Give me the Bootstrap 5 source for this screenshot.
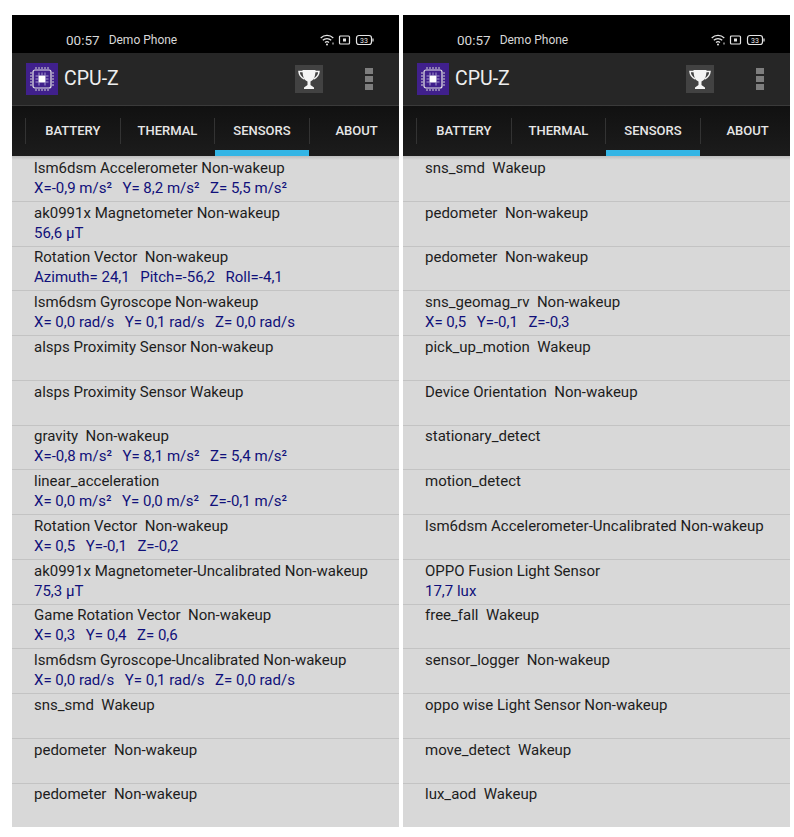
<!DOCTYPE html>
<html lang="en">
<head>
<meta charset="UTF-8">
<title>CPU-Z sensors</title>
<link rel="stylesheet" href="https://cdn.jsdelivr.net/npm/bootstrap@5.3.0/dist/css/bootstrap.min.css">
<style>
body { background: #fff; font-family: Roboto, "Liberation Sans", sans-serif; }
.shots { padding: 15px 4px 0 12px; gap: 4px; }
.phone { width: 387px; height: 812px; overflow: hidden; background: #d8d8d8; }
.status-bar { height: 38px; background: #000; color: #d8d8d8; padding: 12px 25px 0 54px; font-size: 12px; }
.status-time { font-size: 13.5px; margin-right: 9px; }
.app-bar { height: 53px; background: #262626; border-bottom: 1px solid #3a3a3a; padding-left: 14px; color: #eee; }
.app-title { font-size: 19.5px; margin-left: 6px; }
.trophy { width: 28px; height: 28px; background: #424242; margin-left: auto; }
.kebab { width: 8px; margin: 0 26px 0 42px; gap: 2px; }
.kebab span { height: 6px; background: #7d7d7d; }
.tab-bar { height: 50px; background: linear-gradient(#111, #1c1c1c); padding-left: 13px; }
.tab-item { flex: 0 0 94.6px; position: relative; color: #e6e6e6; font-size: 13px; font-weight: 500; border-left: 1px solid #333; margin: 12px 0; }
.tab-item.active::after { content: ""; position: absolute; left: 0; right: 0; bottom: -12px; height: 6px; background: #33b5e5; }
.sensor-list { padding-top: 1px; background: linear-gradient(#bdbdbd, #d8d8d8 4px); }
.sensor-row { height: 44.75px; padding: .8px 0 0 22px; border-bottom: 1px solid #c3c3c3; font-size: 15px; line-height: 20px; color: #1d1d1d; white-space: nowrap; overflow: hidden; }
.sensor-row:last-child { border-bottom: 0; }
.sensor-name { white-space: pre; }
.sensor-val { color: #10107a; }
.sensor-val span { margin-right: 10.5px; }
.batt-num { font-family: Roboto, sans-serif; font-size: 7px; fill: #e6e6e6; }
</style>
</head>
<body>
<div class="shots d-flex" id="shots"></div>

<script>
const leftRows = [
  ["lsm6dsm Accelerometer Non-wakeup", ["X=-0,9 m/s²", "Y= 8,2 m/s²", "Z= 5,5 m/s²"]],
  ["ak0991x Magnetometer Non-wakeup", ["56,6 µT"]],
  ["Rotation Vector  Non-wakeup", ["Azimuth= 24,1", "Pitch=-56,2", "Roll=-4,1"]],
  ["lsm6dsm Gyroscope Non-wakeup", ["X= 0,0 rad/s", "Y= 0,1 rad/s", "Z= 0,0 rad/s"]],
  ["alsps Proximity Sensor Non-wakeup"],
  ["alsps Proximity Sensor Wakeup"],
  ["gravity  Non-wakeup", ["X=-0,8 m/s²", "Y= 8,1 m/s²", "Z= 5,4 m/s²"]],
  ["linear_acceleration", ["X= 0,0 m/s²", "Y= 0,0 m/s²", "Z=-0,1 m/s²"]],
  ["Rotation Vector  Non-wakeup", ["X= 0,5", "Y=-0,1", "Z=-0,2"]],
  ["ak0991x Magnetometer-Uncalibrated Non-wakeup", ["75,3 µT"]],
  ["Game Rotation Vector  Non-wakeup", ["X= 0,3", "Y= 0,4", "Z= 0,6"]],
  ["lsm6dsm Gyroscope-Uncalibrated Non-wakeup", ["X= 0,0 rad/s", "Y= 0,1 rad/s", "Z= 0,0 rad/s"]],
  ["sns_smd  Wakeup"],
  ["pedometer  Non-wakeup"],
  ["pedometer  Non-wakeup"]
];
const rightRows = [
  ["sns_smd  Wakeup"],
  ["pedometer  Non-wakeup"],
  ["pedometer  Non-wakeup"],
  ["sns_geomag_rv  Non-wakeup", ["X= 0,5", "Y=-0,1", "Z=-0,3"]],
  ["pick_up_motion  Wakeup"],
  ["Device Orientation  Non-wakeup"],
  ["stationary_detect"],
  ["motion_detect"],
  ["lsm6dsm Accelerometer-Uncalibrated Non-wakeup"],
  ["OPPO Fusion Light Sensor", ["17,7 lux"]],
  ["free_fall  Wakeup"],
  ["sensor_logger  Non-wakeup"],
  ["oppo wise Light Sensor Non-wakeup"],
  ["move_detect  Wakeup"],
  ["lux_aod  Wakeup"]
];

const chipIcon = `<svg width="32" height="32" viewBox="0 0 32 32"><rect width="32" height="32" fill="#40208c"/>
  <rect x="7" y="7" width="18" height="18" rx="2" fill="none" stroke="#e6e6e6" stroke-width="1.2"/>
  <rect x="12.5" y="12.5" width="7" height="7" fill="#fff"/>
  <path d="M10 4v2M13 4v2M16 4v2M19 4v2M22 4v2M10 26v2M13 26v2M16 26v2M19 26v2M22 26v2M4 10h2M4 13h2M4 16h2M4 19h2M4 22h2M26 10h2M26 13h2M26 16h2M26 19h2M26 22h2" stroke="#d5d5d5" stroke-width="1"/>
  <path d="M9.5 13h3M9.5 16h3M9.5 19h3M19.5 13h3M19.5 16h3M19.5 19h3M13 9.5v3M16 9.5v3M19 9.5v3M13 19.5v3M19 19.5v3" stroke="#c4bce2" stroke-width=".8"/></svg>`;
const trophyIcon = `<svg width="22" height="21" viewBox="0 0 22 21"><path d="M4.500 1h13c0 6-1.500 10-5 11.500V16l3.500 2.500V20H6v-1.500L9.500 16v-3.500C6 11 4.500 7 4.500 1z" fill="#f4f4f4"/><path d="M5 2.500H1c.2 3.500 2 6 5.500 7.500M17 2.500h4c-.2 3.500-2 6-5.500 7.500" fill="none" stroke="#f4f4f4" stroke-width="1.500"/></svg>`;
const statusIcons = `<svg width="54" height="12" viewBox="0 0 54 12" fill="none" stroke="#e6e6e6">
  <path d="M.7 4a9 9 0 0 1 12.600 0M2.800 6.300a6 6 0 0 1 8.400 0M5 8.500a3 3 0 0 1 4 0" stroke-width="1.200"/><circle cx="7" cy="10.500" r="1" fill="#e6e6e6" stroke="none"/><path d="M13 8.500v2" stroke-width="1"/>
  <rect x="19.500" y="2" width="10" height="8" rx="1" stroke-width="1.200"/><rect x="23" y="4.500" width="3" height="3" fill="#e6e6e6" stroke="none"/>
  <rect x="36.500" y="1.500" width="15" height="9" rx="2.500" stroke-width="1.200"/><path d="M53 4.500v3" stroke-width="1.200"/>
  <text class="batt-num" x="44" y="8.500" text-anchor="middle" stroke="none">33</text></svg>`;

const rowHtml = ([name, vals]) => `
  <div class="sensor-row">
    <div class="sensor-name">${name}</div>
    ${vals ? `<div class="sensor-val">${vals.map(v => `<span>${v}</span>`).join("")}</div>` : ""}
  </div>`;

const phoneHtml = (rows) => `
  <div class="phone d-flex flex-column">
    <div class="status-bar d-flex flex-shrink-0 align-items-center">
      <span class="status-time">00:57</span><span>Demo Phone</span>
      <span class="ms-auto d-flex">${statusIcons}</span>
    </div>
    <div class="app-bar d-flex flex-shrink-0 align-items-center">
      ${chipIcon}<span class="app-title">CPU-Z</span>
      <div class="trophy d-flex align-items-center justify-content-center">${trophyIcon}</div>
      <div class="kebab d-flex flex-column"><span></span><span></span><span></span></div>
    </div>
    <div class="tab-bar d-flex flex-shrink-0">
      ${["BATTERY", "THERMAL", "SENSORS", "ABOUT"].map(t =>
        `<div class="tab-item d-flex align-items-center justify-content-center ${t == "SENSORS" ? "active" : ""}">${t}</div>`).join("")}
    </div>
    <div class="sensor-list flex-shrink-0">${rows.map(rowHtml).join("")}</div>
  </div>`;

document.getElementById("shots").innerHTML = phoneHtml(leftRows) + phoneHtml(rightRows);
</script>
<script src="https://cdn.jsdelivr.net/npm/bootstrap@5.3.0/dist/js/bootstrap.bundle.min.js"></script>
</body>
</html>
